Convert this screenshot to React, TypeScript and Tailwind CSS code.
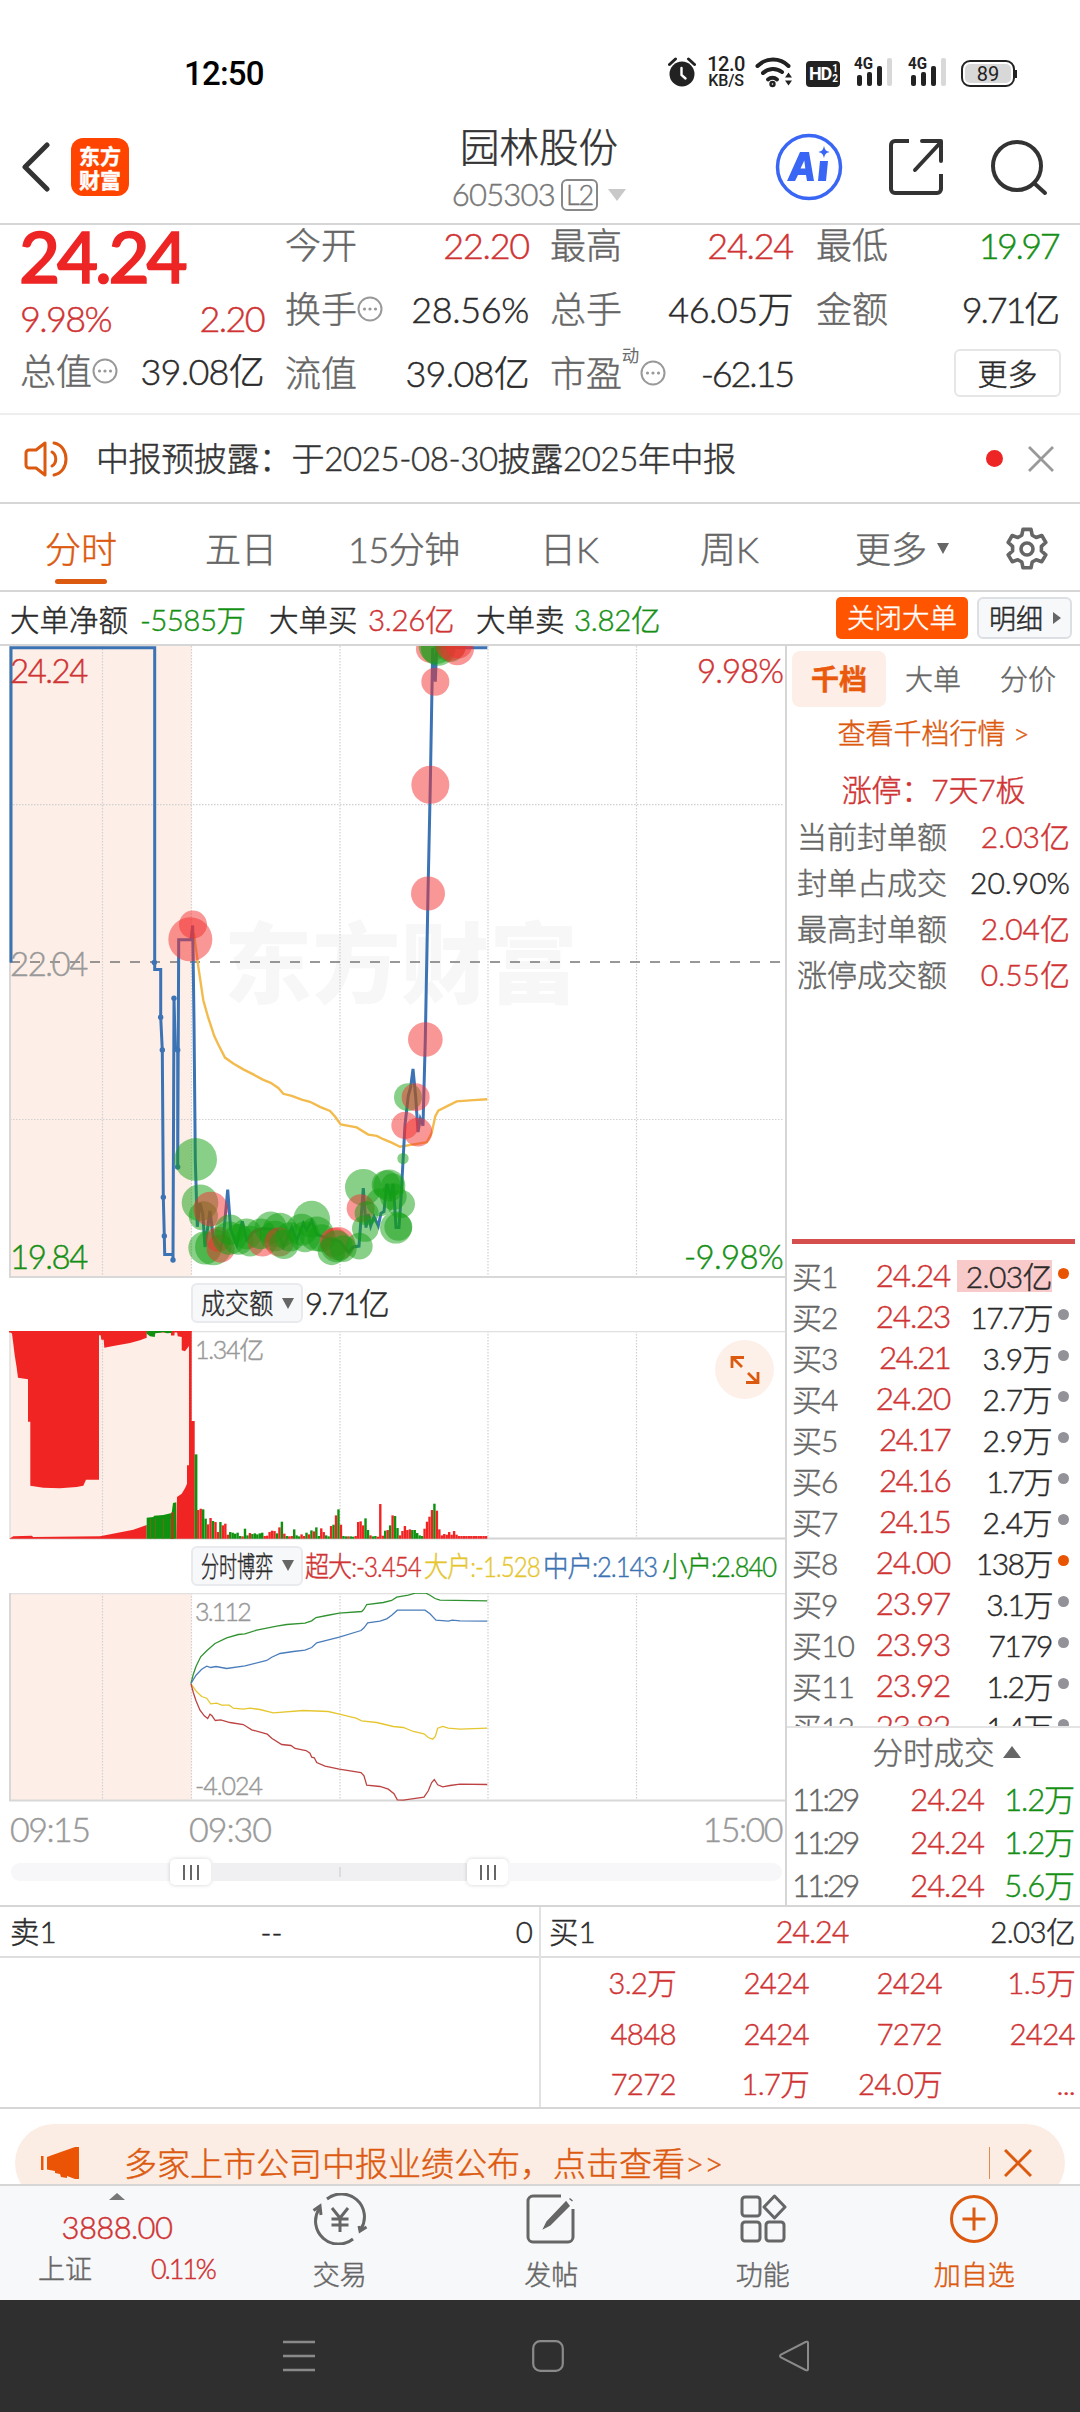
import React from "react";

type Pt = [number, number];

const line = (pts: Pt[], sx: number, sy: number) =>
  pts.map(([x, y]) => `${(x / sx).toFixed(1)},${(y / sy).toFixed(1)}`).join(" ");

/* ---------- status bar ---------- */

function Signal() {
  return (
    <svg width="40" height="32" viewBox="0 0 40 32">
      <text x="0" y="13" fontSize="16" fontWeight="700" fontFamily="Roboto, sans-serif" fill="#222" textLength="19" lengthAdjust="spacingAndGlyphs">4G</text>
      <rect x="3" y="19" width="5" height="11" rx="2" fill="#222" />
      <rect x="13" y="16" width="5" height="14" rx="2" fill="#222" />
      <rect x="23" y="10" width="5" height="20" rx="2" fill="#222" />
      <rect x="33" y="2" width="5" height="28" rx="2" fill="#d8d8d8" />
    </svg>
  );
}

function StatusBar() {
  return (
    <div className="flex h-[120px] items-start pl-[184px] pr-[63px] pt-[55px] [-webkit-text-stroke:0px]">
      <div className="pt-px font-[Roboto] text-[33px] font-medium leading-[36px] tracking-[-0.8px] text-black">12:50</div>
      <div className="ml-auto flex h-[34px] items-center">
        <svg width="28" height="32" viewBox="0 0 28 32" className="mr-[11px]">
          <circle cx="14" cy="18" r="12.5" fill="#222" />
          <path d="M1.5 8.5 7.5 3M26.500 8.500 20.500 3" stroke="#222" strokeWidth="3" strokeLinecap="round" />
          <path d="M13.500 12v7l4 3.500" stroke="#fff" strokeWidth="2.400" fill="none" strokeLinecap="round" />
        </svg>
        <div className="mr-[10px] w-[38px] text-center font-[Roboto] font-medium text-[#222]">
          <div className="text-[20px] leading-[18px] tracking-[-0.5px]">12.0</div>
          <div className="text-[16px] leading-[16px] tracking-[-0.2px]">KB/S</div>
        </div>
        <svg width="38" height="32" viewBox="0 0 38 32" className="mr-[13px]" fill="none" stroke="#222" strokeWidth="4" strokeLinecap="round">
          <path d="M2.500 10a22 22 0 0 1 31 0" />
          <path d="M8 17a14.500 14.500 0 0 1 19 -1" />
          <path d="M13 23.500a7 7 0 0 1 9 0" />
          <circle cx="17.500" cy="28" r="1.200" />
          <path d="M33.500 16.500l3.500 5h-7zM33.500 29.500l3.500 -5h-7z" fill="#222" stroke="none" />
        </svg>
        <div className="mr-[14px] mt-[3px] flex h-[26px] w-[34px] items-center justify-center rounded-[4px] bg-[#222] font-[Roboto] text-[18px] font-bold leading-none tracking-[-1px] text-white">
          HD<span className="ml-px flex flex-col text-[10px] leading-[10px]"><i className="not-italic">1</i><i className="not-italic">2</i></span>
        </div>
        <span className="mr-[14px]"><Signal /></span>
        <span className="mr-[13px]"><Signal /></span>
        <div className="mt-[3px] flex items-center">
          <div className="flex h-[27px] w-[54px] items-center justify-center rounded-[9px] border-2 border-[#222] p-[2px]">
            <div className="flex h-full w-full items-center justify-center rounded-[5px] bg-[#d8d8d8] font-[Roboto] text-[20px] font-normal leading-none text-[#222]">89</div>
          </div>
          <div className="h-[8px] w-[2px] bg-[#222]" />
        </div>
      </div>
    </div>
  );
}

/* ---------- title bar ---------- */

function TitleBar() {
  return (
    <div className="flex h-[105px] items-center border-b-2 border-[#d6d6d6] pl-[19px] pr-[32px] pb-[9px]">
      <svg width="34" height="50" viewBox="0 0 34 50" fill="none" stroke="#333" strokeWidth="5">
        <path d="M28 3 6 25l22 22" strokeLinejoin="round" strokeLinecap="round" />
      </svg>
      <div className="ml-[18px] flex h-[58px] w-[58px] flex-col items-center justify-center rounded-[12px] bg-[#ff4400] font-['Noto_Sans_CJK_SC'] text-[21px] font-bold leading-[24px] text-white">
        <span>东方</span>
        <span>财富</span>
      </div>
      <div className="ml-[323px] mt-[5px] flex w-[174px] flex-col items-center">
        <div className="whitespace-nowrap text-[39.500px] leading-[50px] text-[#333]">园林股份</div>
        <div className="flex h-[46px] items-center">
          <span className="text-[31px] leading-none tracking-[-0.8px] text-[#777]">605303</span>
          <span className="ml-[6px] flex h-[32px] items-center rounded-[6px] border-2 border-[#888] px-[3px] text-[27px] leading-none tracking-[-1px] text-[#777]">L2</span>
          <svg width="18" height="12" viewBox="0 0 18 12" className="ml-[10px]"><path d="M0 0h18L9 12z" fill="#c8c8c8" /></svg>
        </div>
      </div>
      <svg width="68" height="68" viewBox="0 0 68 68" className="ml-auto">
        <circle cx="34" cy="34" r="31.500" fill="none" stroke="#3a66f5" strokeWidth="3.500" />
        <path d="M12 48 25 19h9l5 29h-7l-1-6h-8l-3 6zM25.500 35.500h4.800l-1-8z" fill="#3a66f5" fillRule="evenodd" />
        <path d="M45 28h8l-2 20h-8z" fill="#3a66f5" />
        <path d="M49 13c1 4 2 5 5.500 6-3.500 1-4.500 2-5.500 6-1-4-2-5-5.500-6 3.500-1 4.500-2 5.500-6z" fill="#3a66f5" />
      </svg>
      <svg width="56" height="58" viewBox="0 0 56 58" className="ml-[46px]" fill="none" stroke="#333" strokeWidth="4">
        <path d="M20 3H6a4 4 0 0 0-4 4v44a4 4 0 0 0 4 4h42a4 4 0 0 0 4-4V36" />
        <path d="M33 3h19v20M52 4 26 32" strokeLinejoin="round" strokeLinecap="round" />
      </svg>
      <svg width="60" height="60" viewBox="0 0 60 60" className="ml-[43px]" fill="none" stroke="#333" strokeWidth="4">
        <circle cx="29" cy="29" r="24" />
        <path d="M46 46 57 56" strokeLinecap="round" />
      </svg>
    </div>
  );
}

/* ---------- quote summary ---------- */

function Dots() {
  return (
    <svg width="26" height="26" viewBox="0 0 26 26" fill="none" stroke="#999" strokeWidth="2">
      <circle cx="13" cy="13" r="11.500" />
      <g fill="#999" stroke="none"><circle cx="7.500" cy="13" r="1.600" /><circle cx="13" cy="13" r="1.600" /><circle cx="18.500" cy="13" r="1.600" /></g>
    </svg>
  );
}

function Field({ label, value, tone, dots, sup, fit }: { label: string; value: string; tone?: string; dots?: boolean; sup?: string; fit?: string }) {
  return (
    <div className="flex h-[64px] items-center">
      <span className="text-[#666]">{label}</span>
      {sup && <span className="mb-[36px] w-[18px] text-[17px] text-[#666]">{sup}</span>}
      {dots && <Dots />}
      <span className={`ml-auto ${fit ?? "tracking-[-0.035em]"} ${tone ?? "text-[#2a2a2a]"}`}>{value}</span>
    </div>
  );
}

const RED = "text-[#d03333]";
const GREEN = "text-[#159015]";

function Quote() {
  return (
    <div className="flex h-[190px] whitespace-nowrap border-b-2 border-[#eeeeee] pl-[20px] pr-[22px] text-[36px] leading-none">
      <div className="w-[244px]">
        <div className="h-[61px] -ml-px text-[71px] font-medium leading-[61px] tracking-[-0.045em] text-[#ee2525] [-webkit-text-stroke:1.6px]">24.24</div>
        <div className={`flex h-[64px] items-center justify-between tracking-[-0.045em] ${RED}`}><span>9.98%</span><span>2.20</span></div>
        <div className="-mt-[11px]"><Field label="总值" value="39.08亿" dots fit="tracking-[-0.02em]" /></div>
      </div>
      <div className="-mt-[12px] ml-[21px] w-[244px]">
        <Field label="今开" value="22.20" tone={RED} />
        <Field label="换手" value="28.56%" dots fit="tracking-[-0.01em]" />
        <Field label="流值" value="39.08亿" fit="tracking-[-0.02em]" />
      </div>
      <div className="-mt-[12px] ml-[21px] w-[243px]">
        <Field label="最高" value="24.24" tone={RED} />
        <Field label="总手" value="46.05万" fit="tracking-[-0.015em]" />
        <Field label="市盈" value="-62.15" dots sup="动" fit="tracking-[-0.06em]" />
      </div>
      <div className="-mt-[12px] ml-[23px] w-[242px]">
        <Field label="最低" value="19.97" tone={GREEN} fit="tracking-[-0.07em]" />
        <Field label="金额" value="9.71亿" fit="tracking-[-0.06em]" />
        <div className="flex h-[64px] items-center justify-end">
          <span className="-mr-[3px] flex h-[48px] w-[107px] items-center justify-center rounded-[6px] border-2 border-[#e6e6e6] text-[30px] text-[#2a2a2a]">更多</span>
        </div>
      </div>
    </div>
  );
}

function Notice() {
  return (
    <div className="flex h-[89px] items-center whitespace-nowrap border-b-2 border-[#d6d6d6] pl-[24px] pr-[25px] text-[33px] leading-none text-[#333]">
      <svg width="46" height="38" viewBox="0 0 46 38" fill="none" stroke="#dc5a10" strokeWidth="3" strokeLinejoin="round">
        <path d="M21 3v32l-9-7H5a3 3 0 0 1-3-3V13a3 3 0 0 1 3-3h7z" />
        <path d="M28 12c5 3 5 11 0 14M30 3c16 3 16 29 0 32" strokeLinecap="round" />
      </svg>
      <span className="ml-[26px] tracking-[-0.4px]">中报预披露：于2025-08-30披露2025年中报</span>
      <span className="ml-auto h-[17px] w-[17px] rounded-full bg-[#ee2525]" />
      <svg width="28" height="28" viewBox="0 0 28 28" className="ml-[24px]" stroke="#999" strokeWidth="2.800"><path d="M2 2l24 24M26 2 2 26" /></svg>
    </div>
  );
}

/* ---------- period tabs ---------- */

function Tabs() {
  return (
    <div className="flex h-[88px] items-center whitespace-nowrap border-b-2 border-[#d6d6d6] pt-[3px] text-[36px] leading-none text-[#666]">
      <div className="relative ml-[45px] w-[72px] text-center text-[#dc5a10]">
        分时
        <span className="absolute -bottom-[17px] left-[10px] h-[5px] w-[52px] rounded-full bg-[#dc5a10]" />
      </div>
      <span className="ml-[88px] w-[72px]">五日</span>
      <span className="ml-[71px] w-[112px] tracking-[-0.5px]">15分钟</span>
      <span className="ml-[80px] w-[60px]">日K</span>
      <span className="ml-[100px] w-[60px]">周K</span>
      <span className="ml-[95px] w-[76px]">更多</span>
      <svg width="12" height="11" viewBox="0 0 12 11" className="ml-[6px]"><path d="M0 0h12L6 11z" fill="#666" /></svg>
      <svg width="48" height="48" viewBox="0 0 24 24" className="ml-[54px]" fill="none" stroke="#666" strokeWidth="1.800" strokeLinejoin="round">
        <path d="M10 2.200h4l.6 2.900 2 1.150 2.800-1 2 3.450-2.200 1.950v2.300l2.200 1.950-2 3.450-2.800-1-2 1.150-.6 2.900h-4l-.6-2.900-2-1.150-2.800 1-2-3.450 2.200-1.950v-2.300L2.600 8.700l2-3.450 2.800 1 2-1.150z" />
        <circle cx="12" cy="12" r="3" />
      </svg>
    </div>
  );
}

function BigOrders() {
  return (
    <div className="flex h-[54px] items-center whitespace-nowrap border-b-2 border-[#d6d6d6] pl-[10px] pr-[8px] text-[29.500px] leading-none text-[#2a2a2a]">
      <div className="flex pt-[4px]">
        <span className="w-[130px]">大单净额</span>
        <span className={`w-[129px] tracking-[-0.02em] ${GREEN}`}>-5585万</span>
        <span className="w-[99px]">大单买</span>
        <span className={`w-[108px] tracking-[-0.01em] ${RED}`}>3.26亿</span>
        <span className="w-[98px]">大单卖</span>
        <span className={`tracking-[-0.01em] ${GREEN}`}>3.82亿</span>
      </div>
      <span className="ml-auto flex h-[42px] w-[132px] items-center justify-center rounded-[5px] bg-[#ff5500] text-[27.500px] text-white">关闭大单</span>
      <span className="ml-[9px] flex h-[42px] w-[95px] items-center rounded-[6px] border-2 border-[#dcdfe4] bg-[#f7f8fa] pl-[10px] text-[27px]">
        明细
        <svg width="8" height="12" viewBox="0 0 8 12" className="ml-[10px]"><path d="M0 0v12l8-6z" fill="#666" /></svg>
      </span>
    </div>
  );
}

/* ---------- price chart ---------- */

const priceLine: Pt[] = [
  [33, 760], [33, 12], [464, 12], [464, 777], [482, 777], [482, 890], [487, 968], [490, 1318], [493, 1410], [494, 1454], [519, 1454], [519, 1467],
  [522, 845], [526, 968], [533, 968], [533, 1246], [536, 706], [573, 706], [578, 672], [582, 900], [586, 1230], [592, 1388], [600, 1332], [608, 1356],
  [615, 1436], [630, 1350], [640, 1415], [662, 1437], [670, 1415], [683, 1300], [692, 1395], [710, 1430], [727, 1375], [740, 1420], [760, 1400],
  [790, 1392], [830, 1395], [850, 1435], [875, 1390], [890, 1420], [910, 1380], [920, 1396], [935, 1374], [950, 1406], [980, 1415], [1020, 1424],
  [1045, 1448], [1060, 1436], [1077, 1434], [1090, 1296], [1098, 1390], [1105, 1358], [1112, 1386], [1122, 1364], [1135, 1386], [1143, 1356], [1152, 1352],
  [1160, 1286], [1172, 1316], [1180, 1286], [1188, 1390], [1197, 1390], [1203, 1320], [1215, 1146], [1225, 1076], [1232, 1056], [1239, 1013], [1247, 1080],
  [1254, 1163], [1261, 1132], [1269, 1148], [1276, 943], [1284, 596], [1291, 338], [1298, 12], [1306, 93], [1310, 12], [1325, 12], [1462, 12],
];

const avgLine: Pt[] = [
  [582, 690], [595, 770], [610, 850], [625, 892], [643, 935], [655, 955], [675, 986], [700, 1000], [730, 1014], [760, 1026], [790, 1039], [812, 1046],
  [835, 1058], [850, 1072], [875, 1077], [905, 1086], [930, 1091], [960, 1103], [990, 1113], [1005, 1126], [1022, 1145], [1070, 1152], [1105, 1169],
  [1130, 1172], [1150, 1180], [1175, 1188], [1200, 1198], [1250, 1191], [1280, 1187], [1295, 1165], [1306, 1125], [1315, 1112], [1340, 1102], [1370, 1090], [1420, 1087], [1462, 1085],
];

const priceDots: Pt[] = [[463, 760], [482, 890], [487, 968], [490, 1318], [493, 1410], [519, 1467], [522, 845], [533, 968], [533, 1246]];

const bubbles: [number, number, number, "r" | "g"][] = [
  [571, 705, 66, "r"], [579, 670, 42, "r"], [587, 1228, 64, "g"], [600, 1331, 55, "g"], [610, 1362, 44, "g"], [632, 1346, 52, "r"], [615, 1438, 50, "g"],
  [640, 1436, 55, "g"], [655, 1418, 38, "r"], [662, 1440, 42, "r"], [690, 1395, 46, "g"], [688, 1415, 50, "g"], [715, 1418, 46, "g"], [740, 1405, 46, "g"],
  [750, 1422, 46, "g"], [787, 1424, 44, "r"], [782, 1405, 46, "g"], [812, 1390, 48, "g"], [840, 1396, 52, "g"], [825, 1410, 46, "g"], [838, 1424, 44, "r"],
  [852, 1430, 44, "g"], [870, 1412, 44, "g"], [905, 1395, 48, "g"], [935, 1370, 55, "g"], [915, 1412, 46, "g"], [950, 1405, 52, "g"], [965, 1415, 42, "g"], [1003, 1425, 44, "r"],
  [1015, 1428, 50, "r"], [995, 1446, 42, "g"], [1010, 1434, 48, "g"], [1030, 1440, 40, "g"], [1078, 1434, 40, "g"], [1090, 1294, 55, "g"], [1082, 1344, 42, "r"],
  [1100, 1356, 36, "g"], [1096, 1392, 40, "g"], [1140, 1330, 42, "g"], [1158, 1288, 43, "g"], [1168, 1290, 48, "g"], [1178, 1288, 34, "g"], [1180, 1316, 40, "g"],
  [1188, 1390, 48, "g"], [1195, 1388, 42, "g"], [1203, 1334, 42, "g"], [1209, 1226, 17, "g"], [1224, 1080, 42, "g"], [1247, 1080, 42, "r"], [1215, 1147, 41, "r"],
  [1254, 1163, 43, "r"], [1276, 943, 52, "r"], [1284, 596, 51, "r"], [1291, 338, 57, "r"], [1306, 93, 42, "r"], [1290, 15, 42, "r"], [1315, 14, 52, "g"],
  [1310, 8, 54, "g"], [1350, 8, 48, "g"], [1352, 6, 46, "r"], [1372, 14, 50, "r"], [1376, 6, 40, "r"],
];

function Grid({ h, mid }: { h: number; mid?: boolean }) {
  return (
    <g stroke="#d0d0d0" strokeWidth="1.200" strokeDasharray="1.500 1.500">
      {[102.5, 191.5, 340, 488, 636.5].map((x) => <path key={x} d={`M${x} 0V${h}`} />)}
      {mid && <path d="M10 158.600H784M10 473.500H784" />}
    </g>
  );
}

function PriceChart() {
  return (
    <div className="relative h-[634px] text-[33px] leading-none tracking-[-0.045em]">
      <svg width="786" height="634" viewBox="0 0 786 634" className="block [-webkit-text-stroke:0px]">
        <rect x="10" y="0" width="181.500" height="631" fill="#fdeee7" />
        <text x="224" y="350" fontSize="88" fontWeight="900" letterSpacing="0.500" fontFamily="'Noto Sans CJK SC', sans-serif" fill="#f7f7f7">东方财富</text>
        <Grid h={631} mid />
        <path d="M10 0V631H785" fill="none" stroke="#d8d8d8" strokeWidth="2" />
        <path d="M10 316H786" stroke="#777" strokeWidth="1.700" strokeDasharray="10 10" />
        <g transform="translate(0 -3.4)">
          <polyline points={line(avgLine, 3, 2.376)} fill="none" stroke="#f3bb4d" strokeWidth="2.400" />
          <polyline points={line(priceLine, 3, 2.376)} fill="none" stroke="#3b73b4" strokeWidth="3" />
          {priceDots.map(([x, y], i) => <circle key={i} cx={x / 3} cy={y / 2.376} r="2.700" fill="#3b73b4" />)}
          {bubbles.map(([x, y, r, t], i) => (
            <circle key={i} cx={x / 3} cy={y / 2.376} r={r / 3} fill={t === "r" ? "#f33030" : "#12a012"} fillOpacity="0.500" />
          ))}
        </g>
      </svg>
      <span className={`absolute left-[10px] top-[8px] ${RED}`}>24.24</span>
      <span className="absolute left-[10px] top-[301px] text-[#999]">22.04</span>
      <span className={`absolute left-[10px] top-[594px] ${GREEN}`}>19.84</span>
      <span className={`absolute right-[2px] top-[8px] tracking-[-0.03em] ${RED}`}>9.98%</span>
      <span className={`absolute right-[2px] top-[594px] tracking-[-0.02em] ${GREEN}`}>-9.98%</span>
    </div>
  );
}

/* ---------- volume chart ---------- */

const redTop: Pt[] = [
  [28, 0], [36, 8], [40, 38], [44, 73], [50, 110], [54, 140], [84, 145], [84, 272], [91, 272], [91, 464], [130, 470], [180, 472], [230, 468], [250, 464],
  [258, 446], [297, 446], [297, 13], [302, 13], [304, 26], [311, 26], [313, 50], [340, 45], [390, 36], [420, 28], [440, 20], [440, 0],
];
const redTopRight: Pt[] = [[531, 0], [533, 16], [545, 18], [545, 58], [555, 61], [560, 54], [567, 45], [567, 0]];
const redBottom: Pt[] = [[28, 623], [40, 616], [95, 614], [100, 618], [300, 616], [350, 606], [400, 596], [440, 582], [440, 623]];
const redOpen: Pt[] = [[529, 623], [531, 498], [545, 488], [555, 472], [561, 458], [561, 403], [567, 403], [567, 0], [575, 0], [575, 270], [584, 270], [584, 623]];

const bars: [number, "r" | "g"][] = [
  [253, "g"], [86, "r"], [90, "r"], [88, "g"], [60, "g"], [43, "r"], [62, "r"], [53, "g"], [50, "r"], [20, "r"], [50, "g"], [40, "r"], [45, "r"], [12, "r"], [20, "g"], [18, "g"], [15, "g"],
  [18, "g"], [8, "g"], [7, "r"], [30, "g"], [10, "g"], [17, "r"], [14, "g"], [16, "g"], [13, "g"], [16, "g"], [18, "g"], [8, "r"], [9, "r"], [20, "r"], [24, "r"], [23, "r"], [16, "g"],
  [34, "r"], [51, "g"], [15, "r"], [8, "g"], [7, "r"], [8, "r"], [28, "g"], [10, "g"], [7, "g"], [13, "r"], [8, "r"], [18, "g"], [13, "r"], [25, "g"], [22, "r"], [34, "g"], [8, "g"], [31, "r"],
  [20, "r"], [10, "g"], [7, "g"], [38, "r"], [42, "g"], [70, "r"], [88, "g"], [42, "r"], [8, "g"], [7, "g"], [7, "r"], [7, "g"], [6, "g"], [8, "r"], [50, "r"], [52, "r"], [40, "r"], [61, "g"],
  [26, "g"], [10, "r"], [7, "g"], [8, "g"], [6, "r"], [104, "r"], [9, "r"], [24, "g"], [26, "r"], [40, "g"], [70, "r"], [68, "g"], [32, "g"], [10, "r"], [23, "r"], [38, "r"], [26, "r"], [28, "r"],
  [26, "g"], [26, "g"], [17, "g"], [10, "g"], [8, "g"], [30, "r"], [51, "r"], [66, "r"], [86, "r"], [105, "g"], [84, "r"], [28, "r"], [10, "r"], [14, "r"], [12, "r"], [20, "r"], [12, "r"], [23, "r"], [12, "r"],
  ...Array.from({ length: 12 }, () => [8, "r"] as [number, "r"]),
];

const VR = "#f12424";
const VG = "#0f900f";

function VolumeChart() {
  return (
    <div className="relative h-[209px]">
      <svg width="786" height="209" viewBox="0 0 786 209" className="block">
        <rect x="10" y="0" width="181.500" height="208" fill="#fdeee7" />
        <Grid h={208} />
        <path d="M10 0.500H785M10 0V208" stroke="#e0e0e0" strokeWidth="1.500" />
        <path d="M10 207.500H785" stroke="#d4d4d4" strokeWidth="2" />
        <g fill={VR}>
          {[redTop, redTopRight, redBottom, redOpen].map((p, i) => <polygon key={i} points={line(p, 3, 3)} />)}
          <rect x="9" y="0" width="182.500" height="1.500" />
          <rect x="171" y="0" width="3.500" height="4.500" />
        </g>
        <g fill={VG}>
          <polygon points={line([[440, 0], [440, 8], [450, 16], [464, 18], [466, 7], [480, 5], [490, 3], [500, 7], [513, 6], [516, 0]], 3, 3)} />
          <polygon points={line([[440, 623], [440, 560], [460, 558], [462, 554], [490, 552], [515, 546], [519, 516], [529, 514], [529, 623]], 3, 3)} />
        </g>
        <rect x="171.500" y="181" width="2" height="27" fill="#b03a18" />
        {[150, 155, 163, 170].map((x) => <rect key={x} x={x} y="188" width="0.800" height="20" fill="#7a6a18" />)}
        {bars.map(([h, t], i) => (
          <rect key={i} x={194.600 + i * 2.460} y={207.700 - h / 3} width={i === 0 ? 2.800 : 2.400} height={h / 3} fill={t === "r" ? VR : VG} />
        ))}
      </svg>
      <span className="absolute left-[195px] top-[6px] text-[25px] leading-none tracking-[-0.05em] text-[#999]">1.34亿</span>
      <span className="absolute right-[11px] top-[9px] flex h-[59px] w-[59px] items-center justify-center rounded-full bg-[#fdf0e9]">
        <svg width="30" height="30" viewBox="0 0 30 30" fill="none" stroke="#dc5a10" strokeWidth="2.800">
          <path d="M2 13V2.500h12M2.500 2.500 12 12M28 17v10.500H16M27.500 27.500 18 18" />
        </svg>
      </span>
    </div>
  );
}

/* ---------- order-size game chart ---------- */

const small: Pt[] = [[573, 273], [580, 245], [588, 222], [602, 193], [620, 175], [645, 153], [680, 136], [715, 126], [735, 124], [770, 113], [830, 101], [860, 96], [915, 92], [935, 85], [948, 75], [980, 69], [1018, 62], [1085, 57], [1092, 50], [1100, 36], [1150, 30], [1175, 24], [1190, 14], [1225, 8], [1245, 2], [1278, 2], [1290, 8], [1305, 18], [1320, 23], [1462, 25]];
const mid: Pt[] = [[573, 273], [588, 248], [605, 230], [620, 221], [632, 225], [648, 222], [680, 228], [735, 220], [800, 204], [815, 194], [840, 183], [880, 177], [915, 173], [935, 165], [950, 151], [1018, 134], [1083, 114], [1092, 106], [1103, 91], [1140, 86], [1160, 79], [1175, 68], [1192, 53], [1275, 53], [1290, 64], [1308, 83], [1345, 86], [1357, 83], [1380, 85], [1462, 86]];
const large: Pt[] = [[573, 274], [590, 298], [605, 312], [620, 317], [632, 334], [650, 332], [665, 338], [688, 338], [700, 347], [730, 350], [750, 347], [780, 351], [820, 361], [910, 354], [985, 357], [1018, 365], [1068, 377], [1085, 385], [1130, 390], [1180, 402], [1210, 405], [1240, 417], [1272, 424], [1285, 435], [1298, 440], [1306, 432], [1313, 407], [1328, 402], [1345, 407], [1380, 410], [1462, 407]];
const huge: Pt[] = [[573, 274], [580, 300], [588, 325], [600, 353], [613, 370], [623, 378], [630, 365], [636, 370], [646, 384], [662, 382], [690, 390], [730, 396], [755, 412], [802, 425], [815, 437], [845, 456], [873, 459], [885, 468], [918, 474], [930, 482], [935, 494], [943, 496], [950, 510], [975, 521], [1018, 530], [1083, 540], [1092, 550], [1100, 578], [1140, 582], [1165, 590], [1182, 604], [1192, 622], [1210, 623], [1272, 614], [1285, 595], [1295, 570], [1303, 561], [1313, 577], [1328, 583], [1350, 579], [1380, 575], [1462, 576]];

function GameChart() {
  return (
    <div className="relative h-[210px] text-[25px] leading-none tracking-[-0.04em] text-[#999]">
      <svg width="786" height="210" viewBox="0 0 786 210" className="block">
        <rect x="10" y="0" width="181.500" height="208" fill="#fdeee7" />
        <Grid h={208} />
        <path d="M10 0.500H785" stroke="#e0e0e0" strokeWidth="1.500" />
        <path d="M10 0V207.500H785" fill="none" stroke="#d8d8d8" strokeWidth="2" />
        <g fill="none" strokeWidth="1.300" transform="translate(0 -0.5)">
          <polyline points={line(small, 3, 3)} stroke="#319231" />
          <polyline points={line(mid, 3, 3)} stroke="#4b7dba" />
          <polyline points={line(large, 3, 3)} stroke="#e6c62f" />
          <polyline points={line(huge, 3, 3)} stroke="#bd4343" />
        </g>
      </svg>
      <span className="absolute left-[195px] top-[6px] tracking-[-0.07em]">3.112</span>
      <span className="absolute left-[195px] top-[180px]">-4.024</span>
    </div>
  );
}

function Picker({ children, squeeze }: { children: string; squeeze: string }) {
  return (
    <span className="ml-[191px] flex h-[40px] w-[112px] items-center rounded-[6px] border-2 border-[#e8eaee] bg-[#f7f8fa] pl-[8px] text-[28px] text-[#2a2a2a]">
      <span className="w-[73px]"><span className={`inline-block origin-left ${squeeze}`}>{children}</span></span>
      <svg width="12" height="11" viewBox="0 0 12 11" className="ml-[8px]"><path d="M0 0h12L6 11z" fill="#666" /></svg>
    </span>
  );
}

function Stat({ tone, squeeze, children }: { tone: string; squeeze: string; children: string }) {
  return <span className={`w-[119px] ${tone}`}><span className={`inline-block origin-left tracking-[-0.04em] ${squeeze}`}>{children}</span></span>;
}

function Handle() {
  return (
    <span className="flex h-[26px] w-[41px] items-center justify-center gap-[5px] rounded-[5px] bg-white shadow-[0_0_4px_rgba(0,0,0,0.18)]">
      <i className="h-[15px] w-[2px] bg-[#666]" /><i className="h-[15px] w-[2px] bg-[#666]" /><i className="h-[15px] w-[2px] bg-[#666]" />
    </span>
  );
}

function Charts() {
  return (
    <div className="w-[787px] shrink-0 overflow-hidden border-r-2 border-[#d6d6d6]">
      <PriceChart />
      <div className="flex h-[51px] items-center whitespace-nowrap pb-[5px] text-[30px] leading-none text-[#2a2a2a]">
        <Picker squeeze="scale-x-[0.86]">成交额</Picker>
        <span className="ml-[2px] text-[31px] tracking-[-0.06em]">9.71亿</span>
      </div>
      <VolumeChart />
      <div className="flex h-[53px] items-center whitespace-nowrap pb-[2px] text-[28px] leading-none">
        <Picker squeeze="scale-x-[0.645]">分时博弈</Picker>
        <div className="ml-[2px] flex">
          <Stat tone={RED} squeeze="scale-x-[0.86]">超大:-3.454</Stat>
          <Stat tone="text-[#e6c62f]" squeeze="scale-x-[0.86]">大户:-1.528</Stat>
          <Stat tone="text-[#3b73b4]" squeeze="scale-x-[0.91]">中户:2.143</Stat>
          <Stat tone={GREEN} squeeze="scale-x-[0.91]">小户:2.840</Stat>
        </div>
      </div>
      <GameChart />
      <div className="flex h-[51px] items-center pl-[10px] pr-[3px] text-[34px] leading-none tracking-[-0.045em] text-[#999]">
        <span className="w-[179px]">09:15</span>
        <span className="tracking-[-0.03em]">09:30</span>
        <span className="ml-auto">15:00</span>
      </div>
      <div className="mt-[2px] flex h-[32px] items-center pl-[11px] pr-[3px]">
        <span className="h-[18px] w-[159px] rounded-l-full bg-[#f7f7f9]" />
        <Handle />
        <span className="flex h-[18px] w-[256px] items-center bg-[#f0f0f2] pl-[128px]"><i className="h-[10px] w-[2px] bg-[#dcdcdc]" /></span>
        <Handle />
        <span className="h-[18px] flex-1 rounded-r-full bg-[#f7f7f9]" />
      </div>
    </div>
  );
}

/* ---------- order book ---------- */

const sealed: [string, string, boolean][] = [
  ["当前封单额", "2.03亿", true], ["封单占成交", "20.90%", false], ["最高封单额", "2.04亿", true], ["涨停成交额", "0.55亿", true],
];

const bids: [string, string, string][] = [
  ["买1", "24.24", "2.03亿"], ["买2", "24.23", "17.7万"], ["买3", "24.21", "3.9万"], ["买4", "24.20", "2.7万"], ["买5", "24.17", "2.9万"], ["买6", "24.16", "1.7万"],
  ["买7", "24.15", "2.4万"], ["买8", "24.00", "138万"], ["买9", "23.97", "3.1万"], ["买10", "23.93", "7179"], ["买11", "23.92", "1.2万"], ["买12", "23.82", "1.4万"],
];

function Book() {
  return (
    <div className="flex-1 whitespace-nowrap text-[30px] leading-none text-[#2a2a2a]">
      <div className="flex h-[61px] items-end pl-[5px] text-[28px] text-[#666]">
        <span className="flex h-[56px] w-[94px] items-center justify-center rounded-[8px] bg-[#fdeee7] font-bold text-[#ea5a0c]">千档</span>
        <span className="flex h-[56px] w-[94px] items-center justify-center">大单</span>
        <span className="flex h-[56px] w-[96px] items-center justify-center">分价</span>
      </div>
      <div className="flex h-[52px] items-center justify-center text-[28px] text-[#dc5a10]">查看千档行情 &gt;</div>
      <div className={`flex h-[54px] items-center justify-center pt-[6px] tracking-[-0.2px] ${RED}`}>涨停：7天7板</div>
      {sealed.map(([k, v, up]) => (
        <div key={k} className="flex h-[46px] items-center justify-between pl-[10px] pr-[10px]">
          <span className="text-[#666]">{k}</span>
          <span className={up ? RED : ""}>{v}</span>
        </div>
      ))}
      <div className="mx-[5px] mt-[242px] h-[5px] bg-[#d64f4f]" />
      <div className="h-[484px] overflow-hidden border-b-2 border-[#e4e4e4] pt-[11px]">
        {bids.map(([k, p, v], i) => (
          <div key={k} className="flex h-[41px] items-center pl-[5px]">
            <span className="w-[70px] tracking-[-0.03em] text-[#666]">{k}</span>
            <span className={`w-[88px] text-right text-[31.500px] tracking-[-0.04em] ${p.slice(2).includes("1") ? "tracking-[-0.06em]" : ""} ${RED}`}>{p}</span>
            <span className={`ml-[7px] flex h-[32px] w-[95px] items-center justify-end text-[30px] ${v.includes("1") ? "tracking-[-0.05em]" : "tracking-[-0.02em]"} ${i === 0 ? "bg-[#f9caca]" : ""}`}>{v}</span>
            <span className={`mb-[4px] ml-[6px] h-[11px] w-[11px] rounded-full ${i === 0 || i === 7 ? "bg-[#e85400]" : "bg-[#929298]"}`} />
          </div>
        ))}
      </div>
      <div className="flex h-[50px] items-center justify-center gap-[8px] pb-[2px] pl-[44px] pr-[18px] text-[30.500px] text-[#666]">
        分时成交
        <svg width="18" height="12" viewBox="0 0 18 12"><path d="M0 12h18L9 0z" fill="#666" /></svg>
      </div>
      {["1.2万", "1.2万", "5.6万"].map((v, i) => (
        <div key={i} className="flex h-[43px] items-center pb-px pl-[5px] pr-[6px] text-[31px] tracking-[-0.035em]">
          <span className="w-[94px] tracking-[-0.09em] text-[#666]">11:29</span>
          <span className={`w-[98px] text-right ${RED}`}>{"24.24"}</span>
          <span className={`ml-auto ${GREEN}`}>{v}</span>
        </div>
      ))}
    </div>
  );
}

/* ---------- level-2 queue ---------- */

const queue = ["3.2万", "2424", "2424", "1.5万", "4848", "2424", "7272", "2424", "7272", "1.7万", "24.0万", "..."];

function Queue() {
  return (
    <div className="flex h-[204px] whitespace-nowrap border-b-2 border-t-2 border-[#d6d6d6] text-[29.500px] leading-none text-[#2a2a2a]">
      <div className="w-[541px] border-r-2 border-[#e2e2e2]">
        <div className="grid h-[51px] grid-cols-3 items-center border-b-2 border-[#dedede] pl-[10px] pr-[6px]">
          <span>卖1</span><span className="text-center">--</span><span className="text-right">0</span>
        </div>
      </div>
      <div className="flex-1">
        <div className="grid h-[51px] grid-cols-3 items-center border-b-2 border-[#dedede] pl-[8px] pr-[5px]">
          <span>买1</span><span className={`text-center text-[30.500px] tracking-[-0.035em] ${RED}`}>24.24</span><span className="text-right tracking-[-0.02em]">2.03亿</span>
        </div>
        <div className={`grid h-[151px] grid-cols-4 items-center pl-[2px] pr-[5px] text-right tracking-[-0.025em] ${RED}`}>
          {queue.map((q, i) => <span key={i}>{q}</span>)}
        </div>
      </div>
    </div>
  );
}

function Banner() {
  return (
    <div className="h-[75px] overflow-hidden px-[15px] pt-[15px]">
      <div className="flex h-[78px] items-center whitespace-nowrap rounded-[42px] bg-[#fcede4] pl-[26px] pr-[33px] text-[33px] leading-none text-[#dc5a10]">
        <svg width="38" height="34" viewBox="0 0 38 34" fill="#ea5404"><path d="M0 10h2.500v14H0zM6 11l4-1.500L34 1h4v32h-4l-8-3v2l-6-1-1-3-5-1v-2l-8-1.500z" /></svg>
        <span className="ml-[45px]">多家上市公司中报业绩公布，点击查看&gt;&gt;</span>
        <span className="ml-auto h-[32px] w-[1.500px] bg-[#e08a50]" />
        <svg width="28" height="28" viewBox="0 0 28 28" className="ml-[14px]" stroke="#dc5a10" strokeWidth="3"><path d="M1 1l26 26M27 1 1 27" /></svg>
      </div>
    </div>
  );
}

/* ---------- bottom navigation ---------- */

function NavItem({ label, children, active }: { label: string; children: React.ReactNode; active?: boolean }) {
  return (
    <div className={`flex w-[211.600px] flex-col items-center text-[27px] leading-none ${active ? "text-[#dc5a10]" : "text-[#666]"}`}>
      <svg width="56" height="52" viewBox="0 0 56 52" className="mt-[7px]" fill="none" stroke="currentColor" strokeWidth="3">{children}</svg>
      <span className="mt-[16px]">{label}</span>
    </div>
  );
}

function BottomNav() {
  return (
    <div className="flex h-[116px] whitespace-nowrap border-t-2 border-[#d6d6d6] bg-[#f7f8fa]">
      <div className={`flex w-[234px] flex-col items-center leading-none ${RED}`}>
        <svg width="16" height="7" viewBox="0 0 16 7" className="mt-[7px]"><path d="M0 7h16L8 0z" fill="#777" /></svg>
        <div className="mt-[12px] h-[31px] text-[31px] leading-[31px] tracking-[-0.02em]">3888.00</div>
        <div className="mt-[12px] flex w-full pl-[38px] text-[27px] leading-[27px]">
          <span className="w-[113px] text-[#666]">上证</span>
          <span className="tracking-[-0.08em]">0.11%</span>
        </div>
      </div>
      <NavItem label="交易">
        <path d="M15 6a23 23 0 0 1 34 30M41 46A23 23 0 0 1 7 16" />
        <path d="M1.500 17.500 8 13l1 9M54.500 34 48 38l-1-5" />
        <path d="M20 15l8 10 8-10M28 25v14M19.500 26h17M19.500 32h17" />
      </NavItem>
      <NavItem label="发帖">
        <path d="M38 3H10a5 5 0 0 0-5 5v36a5 5 0 0 0 5 5h35a5 5 0 0 0 5-5V16" />
        <path d="M43 9 24 29l-3 6 6-3 19-19zM46.500 5.500l3 2.500" fill="currentColor" strokeWidth="1.500" />
      </NavItem>
      <NavItem label="功能">
        <rect x="7" y="4" width="18" height="19" rx="3" /><rect x="7" y="29" width="18" height="19" rx="3" /><rect x="31" y="29" width="18" height="19" rx="3" />
        <path d="M39.500 3 50 14 39.500 25 29 14z" strokeLinejoin="round" />
      </NavItem>
      <NavItem label="加自选" active>
        <circle cx="28" cy="26" r="22.500" /><path d="M28 14.500v23M16.500 26h23" />
      </NavItem>
    </div>
  );
}

function SystemNav() {
  return (
    <div className="flex h-[112px] items-center bg-[#2f2f2f] pl-[283px]">
      <svg width="32" height="32" viewBox="0 0 32 32" stroke="#8a8a8a" strokeWidth="2.600"><path d="M0 2h32M0 16h32M0 30h32" /></svg>
      <svg width="32" height="32" viewBox="0 0 32 32" className="ml-[217px]" fill="none" stroke="#8a8a8a" strokeWidth="2.200"><rect x="1.200" y="1.200" width="29.600" height="29.600" rx="7" /></svg>
      <svg width="32" height="32" viewBox="0 0 32 32" className="ml-[214px]" fill="none" stroke="#8a8a8a" strokeWidth="2"><path d="M30 3v26q0 2-2.500 1L3 17.500q-2-1.500 0-3L27.500 2Q30 1 30 3z" /></svg>
    </div>
  );
}

export default function App() {
  return (
    <div className="h-[2412px] w-[1080px] overflow-hidden bg-white font-['Lato','Noto_Sans_CJK_SC',sans-serif] font-light [-webkit-text-stroke:0.45px]">
      <StatusBar />
      <TitleBar />
      <Quote />
      <Notice />
      <Tabs />
      <BigOrders />
      <div className="flex h-[1259px]">
        <Charts />
        <Book />
      </div>
      <Queue />
      <Banner />
      <BottomNav />
      <SystemNav />
    </div>
  );
}
